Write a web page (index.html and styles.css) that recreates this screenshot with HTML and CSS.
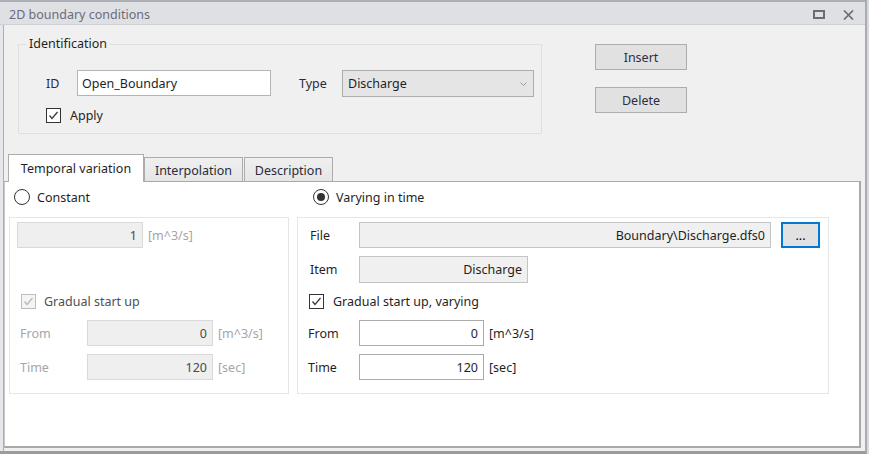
FILE: index.html
```html
<!DOCTYPE html>
<html lang="en">
<head>
 <meta charset="UTF-8">
 <title>2D boundary conditions</title>
 <link rel="stylesheet" href="styles.css">
</head>
<body>
<div class="window">
 <div class="titlebar">
  <span class="title">2D boundary conditions</span>
  <span class="win_btns">
   <svg width="12" height="9" viewBox="0 0 12 9"><rect x="1" y="1" width="10" height="7" fill="none" stroke="#6b6d76" stroke-width="2"/></svg>
   <svg width="11" height="10" viewBox="0 0 11 10"><path d="M1 0.5 L10 9.5 M10 0.5 L1 9.5" stroke="#6b6d76" stroke-width="1.7"/></svg>
  </span>
 </div>
 <div class="body">
  <div class="top">
   <fieldset class="ident">
    <legend>Identification</legend>
    <div class="ident_inner">
     <div class="ident_row">
      <label class="lbl_id">ID</label>
      <input class="field field_id" type="text" value="Open_Boundary">
      <label class="lbl_type">Type</label>
      <div class="select">
       <span>Discharge</span>
       <svg width="7" height="4" viewBox="0 0 7 4"><path d="M0.5 0.5 L3.5 3.5 L6.5 0.5" fill="none" stroke="#9a9a9a" stroke-width="1"/></svg>
      </div>
     </div>
     <div class="check_row apply_row">
      <span class="check on"><svg width="13" height="13" viewBox="0 0 13 13"><path d="M2.5 6.5 L5 9.5 L10.5 3" fill="none" stroke="#3a3a3a" stroke-width="1.3"/></svg></span>
      <span class="check_lbl">Apply</span>
     </div>
    </div>
   </fieldset>
   <div class="actions">
    <button type="button" class="btn">Insert</button>
    <button type="button" class="btn">Delete</button>
   </div>
  </div>

  <div class="tabs">
   <div class="tab active">Temporal variation</div>
   <div class="tab tab_interp">Interpolation</div>
   <div class="tab tab_desc">Description</div>
  </div>

  <div class="page">
   <div class="choice">
    <div class="choice_col choice_const"><span class="radio"></span><span class="radio_lbl">Constant</span></div>
    <div class="choice_col choice_vary"><span class="radio on"></span><span class="radio_lbl">Varying in time</span></div>
   </div>
   <div class="groups">
    <div class="group group_const">
     <div class="row row_first pad_input">
      <input class="field field_dis w_const" type="text" value="1" disabled>
      <span class="unit dim">[m^3/s]</span>
     </div>
     <div class="row row_item"></div>
     <div class="row row_check pad_check">
      <span class="check dis"><svg width="13" height="13" viewBox="0 0 13 13"><path d="M2.5 6.5 L5 9.5 L10.5 3" fill="none" stroke="#b8b8b8" stroke-width="1.3"/></svg></span>
      <span class="check_lbl dis_lbl">Gradual start up</span>
     </div>
     <div class="row row_from pad_label">
      <span class="lbl lbl_const dim">From</span>
      <input class="field field_dis w_const" type="text" value="0" disabled>
      <span class="unit dim">[m^3/s]</span>
     </div>
     <div class="row row_time pad_label">
      <span class="lbl lbl_const dim">Time</span>
      <input class="field field_dis w_const" type="text" value="120" disabled>
      <span class="unit dim">[sec]</span>
     </div>
    </div>

    <div class="group group_vary">
     <div class="row row_first pad_vary">
      <span class="lbl lbl_vary">File</span>
      <input class="field field_ro w_file" type="text" value="Boundary\Discharge.dfs0" readonly>
      <button type="button" class="btn_browse">...</button>
     </div>
     <div class="row row_item pad_vary">
      <span class="lbl lbl_vary">Item</span>
      <input class="field field_ro w_item" type="text" value="Discharge" readonly>
     </div>
     <div class="row row_check pad_check_vary">
      <span class="check on"><svg width="13" height="13" viewBox="0 0 13 13"><path d="M2.5 6.5 L5 9.5 L10.5 3" fill="none" stroke="#3a3a3a" stroke-width="1.3"/></svg></span>
      <span class="check_lbl">Gradual start up, varying</span>
     </div>
     <div class="row row_from pad_label_vary">
      <span class="lbl lbl_vary2">From</span>
      <input class="field field_num w_num" type="text" value="0">
      <span class="unit">[m^3/s]</span>
     </div>
     <div class="row row_time pad_label_vary">
      <span class="lbl lbl_vary2">Time</span>
      <input class="field field_num w_num" type="text" value="120">
      <span class="unit">[sec]</span>
     </div>
    </div>
   </div>
  </div>
 </div>
</div>
</body>
</html>
```

FILE: styles.css
```css
html{
  background: #d8d9dc;
}
body{
  margin: 0;
  font-family: "Noto Sans", "Open Sans", sans-serif;
  font-size: 12.5px;
  color: #1f1f1f;
}
.window{
  width: 867px;
  height: 454px;
  box-sizing: border-box;
  display: flex;
  flex-direction: column;
  background: #e6e7ea;
  border-top: 2px solid #abaeb5;
  border-right: 2px solid #a9acb2;
  border-bottom: 3px solid #9a9ca1;
}
.titlebar{
  flex: none;
  height: 23px;
  box-sizing: border-box;
  padding: 3px 11px 0 9px;
  display: flex;
  align-items: center;
  justify-content: space-between;
  background: #dfe0e4;
  border-bottom: 1px solid #cdd0d5;
}
.title{
  color: #6b6b7d;
}
.win_btns{
  display: flex;
  align-items: center;
  gap: 18px;
}
.win_btns svg{
  display: block;
}
.body{
  flex: 1;
  min-height: 0;
  display: flex;
  flex-direction: column;
  margin-left: 3px;
  padding: 0 4px 3px 0;
  background: #f0f0f0;
  border-left: 1px solid #aaadb3;
}

/* identification */
.top{
  display: flex;
  align-items: flex-start;
}
.ident{
  margin: 11px 0 0 14px;
  padding: 0;
  width: 524px;
  box-sizing: border-box;
  min-width: 0;
  border: 1px solid #dfdfdf;
}
.ident legend{
  margin-left: 7px;
  padding: 0 3px;
  line-height: 16px;
}
.ident_inner{
  padding: 18px 0 10px 27px;
}
.ident_row{
  display: flex;
  align-items: flex-start;
  height: 27px;
}
.lbl_id{
  width: 31px;
  line-height: 27px;
  color: #2b2b3a;
}
.lbl_type{
  width: 43px;
  margin-left: 28px;
  line-height: 27px;
  color: #2b2b3a;
}
.field{
  box-sizing: border-box;
  height: 26px;
  margin: 0;
  padding: 0 5px;
  font-family: inherit;
  font-size: inherit;
  color: #1f1f1f;
  background: #fff;
  border: 1px solid #ababab;
  outline: none;
}
.field_id{
  width: 194px;
  padding-left: 4px;
  border-color: #b4b4b4;
}
.select{
  width: 192px;
  height: 27px;
  box-sizing: border-box;
  padding: 0 6px 0 5px;
  display: flex;
  align-items: center;
  justify-content: space-between;
  background: #e5e5e5;
  border: 1px solid #adadad;
}
.check_row{
  display: flex;
  align-items: center;
}
.apply_row{
  margin-top: 10px;
  height: 16px;
}
.check{
  width: 15px;
  height: 15px;
  box-sizing: border-box;
  display: flex;
  align-items: center;
  justify-content: center;
  background: #fff;
  border: 1px solid #333;
}
.check.dis{
  border-color: #bdbdbd;
  background: #f4f4f4;
}
.check_lbl{
  margin-left: 9px;
}
.dis_lbl{
  margin-left: 8px;
  color: #505050;
}
.actions{
  margin: 19px 0 0 53px;
  display: flex;
  flex-direction: column;
  gap: 17px;
}
.btn{
  width: 92px;
  height: 26px;
  font-family: inherit;
  font-size: inherit;
  color: #2e2e40;
  background: #e1e1e1;
  border: 1px solid #adadad;
  padding: 0;
}

/* tabs */
.tabs{
  margin-top: 20px;
  height: 27px;
  flex: none;
  display: flex;
  align-items: flex-end;
}
.tab{
  height: 24px;
  box-sizing: border-box;
  display: flex;
  align-items: center;
  justify-content: center;
  color: #2b2b3a;
  background: linear-gradient(#f0f0f0, #e5e5e5);
  border: 1px solid #acacac;
  border-bottom: none;
}
.tab.active{
  position: relative;
  z-index: 1;
  width: 136px;
  height: 28px;
  margin: 0 0 -1px 4px;
  padding-bottom: 0;
  background: #fff;
  color: #1f1f1f;
}
.tab_interp{
  width: 99px;
  padding-top: 2px;
}
.tab_desc{
  width: 89px;
  margin-left: 1px;
  padding-top: 2px;
}
.page{
  flex: 1;
  padding: 7px 0 0 4px;
  background: #fff;
  border-top: 1px solid #a9a9a9;
  border-left: 1px solid #c6c6c6;
  border-right: 2px solid #a9a9a9;
  border-bottom: 2px solid #a9a9a9;
}
.choice{
  display: flex;
  height: 16px;
}
.choice_col{
  display: flex;
  align-items: center;
}
.choice_const{
  width: 288px;
  padding-left: 5px;
  box-sizing: border-box;
}
.choice_vary{
  padding-left: 16px;
}
.radio{
  width: 16px;
  height: 16px;
  box-sizing: border-box;
  border: 1px solid #333;
  border-radius: 50%;
  display: flex;
  align-items: center;
  justify-content: center;
  background: #fff;
}
.radio.on::after{
  content: "";
  width: 8px;
  height: 8px;
  border-radius: 50%;
  background: #333;
}
.radio_lbl{
  margin-left: 7px;
}

/* groups */
.groups{
  margin-top: 12px;
  display: flex;
  gap: 8px;
}
.group{
  box-sizing: border-box;
  padding: 4px 0 13px 0;
  border: 1px solid #e6e6e6;
  display: flex;
  flex-direction: column;
}
.group_const{
  width: 280px;
}
.group_vary{
  width: 532px;
}
.row{
  display: flex;
  align-items: center;
}
.row_first{
  height: 26px;
}
.row_item{
  height: 27px;
  margin-top: 8px;
}
.row_check{
  height: 15px;
  margin-top: 11px;
}
.row_from{
  height: 26px;
  margin-top: 11px;
}
.row_time{
  height: 26px;
  margin-top: 8px;
}
.pad_input{
  padding-left: 7px;
}
.pad_check{
  padding-left: 11px;
}
.pad_label{
  padding-left: 10px;
}
.pad_vary{
  padding-left: 12px;
}
.pad_check_vary{
  padding-left: 11px;
}
.pad_label_vary{
  padding-left: 10px;
}
.lbl_const{
  width: 67px;
}
.lbl_vary{
  width: 49px;
}
.lbl_vary2{
  width: 51px;
}
.dim{
  color: #a5a5a5;
}
.unit{
  margin-left: 5px;
}
.field_dis{
  text-align: right;
  color: #4a4a4a;
  background: #efefef;
  border-color: #d9d9d9;
}
.field_ro{
  text-align: right;
  background: #f0f0f0;
  border-color: #c4c4c4;
}
.field_num{
  text-align: right;
}
.w_const{
  width: 126px;
}
.w_file{
  width: 412px;
}
.w_item{
  width: 169px;
  height: 27px;
}
.w_num{
  width: 125px;
}
.btn_browse{
  width: 39px;
  height: 26px;
  margin-left: 10px;
  padding: 0 0 4px;
  font-family: inherit;
  font-size: inherit;
  line-height: 1;
  background: #e1e1e1;
  border: 2px solid #0078d7;
  display: flex;
  align-items: flex-end;
  justify-content: center;
}
```
